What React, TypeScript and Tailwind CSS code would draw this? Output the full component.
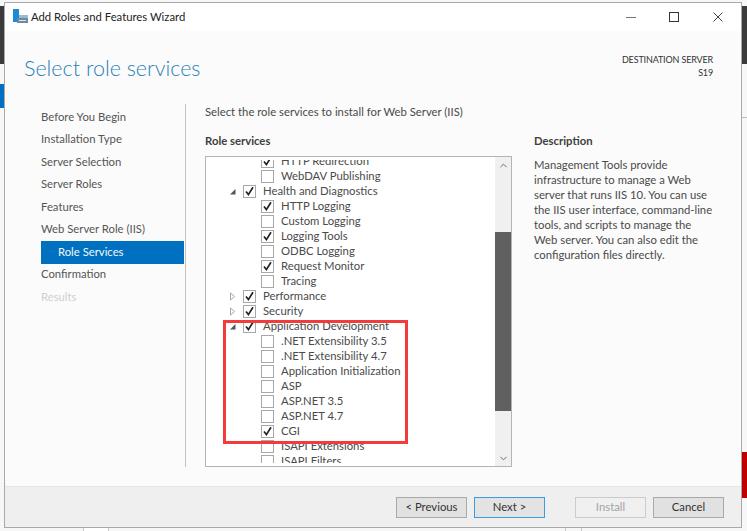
import { ChevronDown, ChevronUp } from "lucide-react";

type Row = { label: string; level: 1 | 2; checked?: boolean; arrow?: "open" | "closed" };

const NAV = [
  "Before You Begin",
  "Installation Type",
  "Server Selection",
  "Server Roles",
  "Features",
  "Web Server Role (IIS)",
];

const ROWS: Row[] = [
  { label: "HTTP Redirection", level: 2, checked: true },
  { label: "WebDAV Publishing", level: 2 },
  { label: "Health and Diagnostics", level: 1, checked: true, arrow: "open" },
  { label: "HTTP Logging", level: 2, checked: true },
  { label: "Custom Logging", level: 2 },
  { label: "Logging Tools", level: 2, checked: true },
  { label: "ODBC Logging", level: 2 },
  { label: "Request Monitor", level: 2, checked: true },
  { label: "Tracing", level: 2 },
  { label: "Performance", level: 1, checked: true, arrow: "closed" },
  { label: "Security", level: 1, checked: true, arrow: "closed" },
  { label: "Application Development", level: 1, checked: true, arrow: "open" },
  { label: ".NET Extensibility 3.5", level: 2 },
  { label: ".NET Extensibility 4.7", level: 2 },
  { label: "Application Initialization", level: 2 },
  { label: "ASP", level: 2 },
  { label: "ASP.NET 3.5", level: 2 },
  { label: "ASP.NET 4.7", level: 2 },
  { label: "CGI", level: 2, checked: true },
  { label: "ISAPI Extensions", level: 2 },
  { label: "ISAPI Filters", level: 2 },
];

function Arrow({ kind }: { kind?: "open" | "closed" }) {
  if (!kind) return <span className="w-[7px] shrink-0" />;
  return (
    <svg width="7" height="9" viewBox="0 0 7 9" className="shrink-0">
      {kind === "open" ? (
        <path d="M6.5 2 V7.5 H1 Z" fill="#555555" />
      ) : (
        <path d="M1.5 1 L5.5 4.5 L1.5 8 Z" fill="#ffffff" stroke="#a6a6a6" />
      )}
    </svg>
  );
}

function Check({ checked }: { checked?: boolean }) {
  return (
    <span className="flex h-[13px] w-[13px] shrink-0 items-center justify-center border border-[#a8a8a8] bg-white">
      {checked && (
        <svg width="11" height="11" viewBox="0 0 11 11">
          <path d="M2 5.5 L4.4 8.6 L9 1.2" fill="none" stroke="#222222" strokeWidth="1.7" />
        </svg>
      )}
    </span>
  );
}

function TreeRow({ row }: { row: Row }) {
  return (
    <div className={`flex h-[15px] items-center ${row.level === 1 ? "pl-[23px]" : "pl-[55px]"}`}>
      {row.level === 1 && <Arrow kind={row.arrow} />}
      <span className={row.level === 1 ? "ml-[7px]" : ""}>
        <Check checked={row.checked} />
      </span>
      <span className="ml-[7px] whitespace-nowrap">{row.label}</span>
    </div>
  );
}

function WizardButton({ label, variant }: { label: string; variant?: "focus" | "disabled" }) {
  const look =
    variant === "focus"
      ? "border-[#3d9be0] bg-[#e3e3e3] text-[#333333]"
      : variant === "disabled"
        ? "border-[#cbcbcb] bg-[#f0f0f0] text-[#a3a3a3]"
        : "border-[#a9a9a9] bg-[#e1e1e1] text-[#333333]";
  return (
    <div className={`flex h-[21px] w-[71px] items-center justify-center border ${look}`}>{label}</div>
  );
}

export default function App() {
  return (
    <div className="relative h-[531px] w-[747px] overflow-hidden bg-[#f7f7f7] font-['Lato',sans-serif] text-[11.3px] text-[#4a4a4a]">
      {/* desktop behind the wizard */}
      <div className="absolute left-0 top-[6px] h-[58px] w-full bg-[#3b3b3b]" />
      <div className="absolute left-0 top-[84px] h-[24px] w-[4px] bg-[#0070c0]" />
      <div className="absolute right-0 top-[452px] h-[46px] w-[5px] bg-[#c00000]" />
      <div className="absolute right-0 top-[117px] h-px w-[5px] bg-[#bdbdbd]" />
      <div className="absolute bottom-0 left-[83px] h-[4px] w-[26px] border-x border-[#c8c8c8] bg-white" />
      <div className="absolute bottom-0 left-[565px] h-[4px] w-[17px] border-x border-[#c8c8c8]" />

      {/* wizard window */}
      <div className="absolute left-[4px] top-[2px] flex h-[526px] w-[738px] flex-col border border-[#a9a9a9] bg-[#fbfbfb]">
        <div className="flex h-[28px] shrink-0 items-center bg-white pl-[7px] text-[#222222]">
          <svg width="16" height="16" viewBox="0 0 16 16" className="shrink-0">
            <rect x="1" y="0" width="6" height="13" fill="#1d8ad6" />
            <rect x="7" y="6" width="9" height="3" fill="#9fb8cc" />
            <rect x="5" y="9" width="11" height="5" fill="#6d8aa5" />
            <rect x="7" y="11" width="7" height="1" fill="#dfe8ef" />
          </svg>
          <span className="ml-[3px]">Add Roles and Features Wizard</span>
          <div className="ml-auto flex items-center text-[#333333]">
            <svg width="10" height="10" viewBox="0 0 10 10" className="mr-[33px]">
              <path d="M0 5.5 H10" stroke="#777777" />
            </svg>
            <svg width="10" height="10" viewBox="0 0 10 10" className="mr-[34px]">
              <rect x="0.5" y="0.5" width="9" height="9" fill="none" stroke="#333333" />
            </svg>
            <svg width="10" height="10" viewBox="0 0 10 10" className="mr-[18px]">
              <path d="M0.5 0.5 L9.5 9.5 M9.5 0.5 L0.5 9.5" stroke="#444444" />
            </svg>
          </div>
        </div>

        <div className="flex h-[73px] shrink-0 justify-between pl-[19px] pr-[28px]">
          <h1 className="pt-[19px] text-[21.5px] font-light leading-[36px] text-[#2a80b9]">Select role services</h1>
          <div className="pt-[22px] text-right text-[9px] leading-[13px] tracking-[-0.15px] text-[#333333]">
            <div>DESTINATION SERVER</div>
            <div>S19</div>
          </div>
        </div>

        <div className="flex h-[363px] shrink-0">
          <nav className="ml-[36px] mr-[1px] w-[143px] shrink-0 text-[#555555]">
            <div className="pt-[2px]" />
            {NAV.map((n) => (
              <div key={n} className="flex h-[22.5px] items-center whitespace-nowrap">
                {n}
              </div>
            ))}
            <div className="flex h-[22.5px] items-center bg-[#0070c0] pl-[17px] text-[#f2f8fc]">Role Services</div>
            <div className="flex h-[22.5px] items-center">Confirmation</div>
            <div className="flex h-[22.5px] items-center text-[#cfcfcf]">Results</div>
          </nav>
          <div className="w-px shrink-0 bg-[#c4c4c4]" />

          <div className="ml-[19px] flex min-h-0 min-w-0 flex-1 flex-col">
            <div className="leading-[15px]">Select the role services to install for Web Server (IIS)</div>
            <div className="flex min-h-0 flex-1">
              <div className="flex min-h-0 w-[307px] shrink-0 flex-col">
                <div className="pt-[14px] font-bold leading-[16px] text-[#404040]">Role services</div>
                <div className="mt-[7px] flex min-h-0 flex-1 border border-[#b4b4b4] bg-white">
                  <div className="mb-[3px] mt-[3px] min-w-0 flex-1 overflow-hidden">
                    <div className="-mt-[6px]">
                      {ROWS.map((r) => (
                        <TreeRow key={r.label} row={r} />
                      ))}
                    </div>
                  </div>
                  <div className="flex w-[16px] shrink-0 flex-col bg-[#f0f0f0] text-[#606060]">
                    <div className="flex h-[16px] items-center justify-center">
                      <ChevronUp size={11} strokeWidth={2} />
                    </div>
                    <div className="mt-[59px] h-[179px] bg-[#606060]" />
                    <div className="mt-auto flex h-[16px] items-center justify-center">
                      <ChevronDown size={11} strokeWidth={2} />
                    </div>
                  </div>
                </div>
              </div>
              <div className="ml-[22px] w-[181px] shrink-0">
                <div className="pt-[14px] font-bold leading-[16px] text-[#404040]">Description</div>
                <p className="mt-[8px] leading-[15px]">
                  Management Tools provide infrastructure to manage a Web server that runs IIS 10. You can use the IIS user interface, command-line tools, and scripts to manage the Web server. You can also edit the configuration files directly.
                </p>
              </div>
            </div>
          </div>
        </div>

        <div className="mt-auto flex h-[41px] shrink-0 items-center border-t border-[#e6e6e6] bg-[#efefef] pl-[391px]">
          <div className="flex gap-[7px]">
            <WizardButton label="< Previous" />
            <WizardButton label="Next >" variant="focus" />
          </div>
          <div className="ml-[30px] flex gap-[7px]">
            <WizardButton label="Install" variant="disabled" />
            <WizardButton label="Cancel" />
          </div>
        </div>
      </div>

      {/* red highlight drawn over the screenshot */}
      <div className="absolute left-[223px] top-[320px] h-[124px] w-[185px] border-[3px] border-[#f33b3b]" />
    </div>
  );
}
